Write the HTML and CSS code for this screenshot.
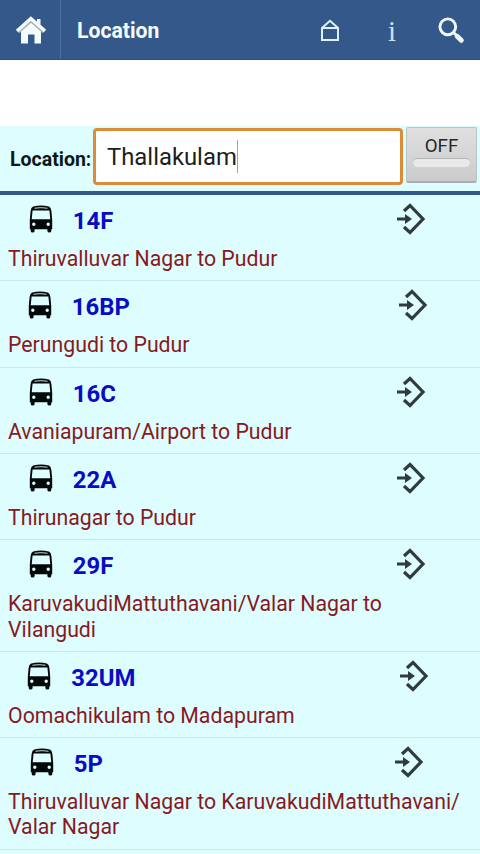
FILE: index.html
```html
<!DOCTYPE html>
<html lang="en">
<head>
<meta charset="utf-8">
<title>Location</title>
<link rel="stylesheet" href="styles.css">
</head>
<body>
<svg class="defs" width="0" height="0" aria-hidden="true">
  <symbol id="bus" viewBox="0 0 24 28">
    <path fill="#050808" fill-rule="evenodd" d="M4.200 1.600Q12-.6 19.800 1.600Q22 2.400 22.400 6L23.200 15V24.200H22.300V26Q22.300 27.500 20.500 27.500Q18.400 27.500 18.400 26V24.200H5.600V26Q5.600 27.500 3.500 27.500Q1.700 27.500 1.700 26V24.200H.8V15L1.600 6Q2 2.400 4.200 1.600ZM3.600 5.600L2.700 14.300H21.300L20.400 5.600ZM4.800 17.500A1.700 1.700 0 1 0 4.800 20.900A1.700 1.700 0 1 0 4.800 17.500ZM19.200 17.500A1.700 1.700 0 1 0 19.200 20.900A1.700 1.700 0 1 0 19.200 17.500Z"/>
    <path fill="none" stroke="#9cabad" stroke-width="1.300" d="M5.500 3.300Q12 1.900 18.500 3.300"/>
  </symbol>
  <symbol id="enter" viewBox="0 0 30 32">
    <path fill="none" stroke="#303b3d" stroke-width="3.200" d="M8 8L14 2.500L27 16L14 29.500L8 24"/>
    <path fill="#303b3d" d="M1 14.400H9V11L16 16L9 21V17.600H1Z"/>
  </symbol>
</svg>
<header class="bar">
  <div class="home">
    <svg width="32" height="30" viewBox="0 0 32 30"><path fill="#f4fbfb" d="M22 4H25.500V10L22 7Z"/><path fill="#f4fbfb" d="M6 15L16 6L26 15V28.500H19.500V19.500H13V28.500H6Z"/><path fill="none" stroke="#a9aeb5" stroke-width="2" d="M3.500 17.500L16 6.500L28.500 17.500"/><path fill="none" stroke="#f4fbfb" stroke-width="3.500" d="M2 16L15.900 3.500L30 16"/></svg>
  </div>
  <h1>Location</h1>
  <nav>
    <svg class="house" width="20" height="23" viewBox="0 0 20 23"><path fill="none" stroke="#dff2f7" stroke-width="2" d="M2 9V21H18V9L10 1.800ZM2 9H18"/></svg>
    <span class="info">i</span>
    <svg class="search" width="27" height="27" viewBox="0 0 27 27"><circle cx="9.800" cy="9.800" r="7.900" fill="none" stroke="#eefafa" stroke-width="2.900"/><path stroke="#eefafa" stroke-width="3" d="M15 15L19 19"/><path stroke="#eefafa" stroke-width="5" stroke-linecap="round" d="M19.300 19.500L23.300 23.300"/></svg>
  </nav>
</header>
<section class="filter">
  <label>Location:</label>
  <div class="field"><span>Thallakulam</span></div>
  <div class="toggle"><span>OFF</span><i></i></div>
</section>
<main>
  <article><div class="head"><svg class="bus"><use href="#bus"/></svg><h2>14F</h2><svg class="enter"><use href="#enter"/></svg></div><p>Thiruvalluvar Nagar to Pudur</p></article>
  <article class="wide"><div class="head"><svg class="bus"><use href="#bus"/></svg><h2>16BP</h2><svg class="enter"><use href="#enter"/></svg></div><p>Perungudi to Pudur</p></article>
  <article><div class="head"><svg class="bus"><use href="#bus"/></svg><h2>16C</h2><svg class="enter"><use href="#enter"/></svg></div><p>Avaniapuram/Airport to Pudur</p></article>
  <article><div class="head"><svg class="bus"><use href="#bus"/></svg><h2>22A</h2><svg class="enter"><use href="#enter"/></svg></div><p>Thirunagar to Pudur</p></article>
  <article><div class="head"><svg class="bus"><use href="#bus"/></svg><h2>29F</h2><svg class="enter"><use href="#enter"/></svg></div><p>KaruvakudiMattuthavani/Valar Nagar to<br>Vilangudi</p></article>
  <article class="widest"><div class="head"><svg class="bus"><use href="#bus"/></svg><h2>32UM</h2><svg class="enter"><use href="#enter"/></svg></div><p>Oomachikulam to Madapuram</p></article>
  <article class="narrow"><div class="head"><svg class="bus"><use href="#bus"/></svg><h2>5P</h2><svg class="enter"><use href="#enter"/></svg></div><p>Thiruvalluvar Nagar to KaruvakudiMattuthavani/<br>Valar Nagar</p></article>
</main>
</body>
</html>
```
FILE: styles.css
```css
* { box-sizing: border-box; }
body { margin: 0; height: 854px; overflow: hidden; background: #fff; font-family: Roboto, "Liberation Sans", sans-serif; }
h1, h2, p { margin: 0; }
.defs { display: block; height: 0; }
.bar { height: 60px; display: flex; align-items: center; background: #35588b; border-bottom: 1px solid #2c4d7e; }
.home { width: 61px; height: 59px; border-right: 1px solid #4d71a2; display: flex; align-items: center; justify-content: center; padding-left: 2px; }
h1 { margin-left: 16px; padding-top: 3px; color: #f5fcfd; font-size: 21.200px; font-weight: 700; line-height: 26px; }
nav { margin-left: auto; display: flex; align-items: center; padding-right: 15px; }
.house { margin: 1px 46px 0 0; }
.info { width: 12px; color: #cfe1ea; font: 29px/30px "Liberation Serif", serif; margin-right: 40px; text-align: center; padding-top: 2px; }
.search { margin-top: 1px; }
.filter { margin-top: 66px; height: 69px; display: flex; background: #ddfdff; border-bottom: 4px solid #31598a; }
label { width: 93px; padding: 22px 0 0 10px; font-size: 19.500px; font-weight: 700; line-height: 24px; color: #0c1719; white-space: nowrap; }
.field { width: 310px; height: 57px; margin-top: 2px; border: 3.500px solid #dc8c36; border-radius: 4px; background: #fff; padding: 9px 0 0 11px; color: #1b1f20; font-size: 23.850px; line-height: 34px; }
.field span { display: inline-block; height: 33px; border-right: 1px solid #a0a4a5; }
.toggle { width: 71px; height: 56px; margin: 1px 0 0 3px; background: linear-gradient(#e0e0e0, #cbcbcb); border: 1px solid #bbc5c6; border-bottom: 2px solid #a7b0b1; border-radius: 2px; display: flex; flex-direction: column; align-items: center; color: #252829; font-size: 18.700px; line-height: 22px; padding-top: 7px; }
.toggle i { width: 57px; height: 9px; margin-top: 1px; border-radius: 5px; background: #e9e9e9; border-top: 1px solid #b5b5b5; }
main { height: 659px; background: #ddfdff; }
article { --shift: 0px; border-bottom: 1px solid #cce5e7; padding: 9px 8px 9.130px; }
.wide { --shift: 1px; }
.widest { --shift: 1.500px; }
.narrow { --shift: -1px; }
.head { display: flex; height: 42px; align-items: flex-start; }
.bus { width: 24px; height: 28px; margin: 1px 0 0 calc(20.500px - var(--shift)); }
h2 { margin-left: 20.300px; padding-top: 1px; width: 304px; font-size: 23.900px; font-weight: 700; line-height: 32px; color: #0b0bc4; }
.enter { width: 30px; height: 32px; margin-left: calc(19.200px + var(--shift) * 3); margin-top: -1px; }
p { font-size: 21.270px; line-height: 25.200px; color: #88191e; white-space: nowrap; }
```
